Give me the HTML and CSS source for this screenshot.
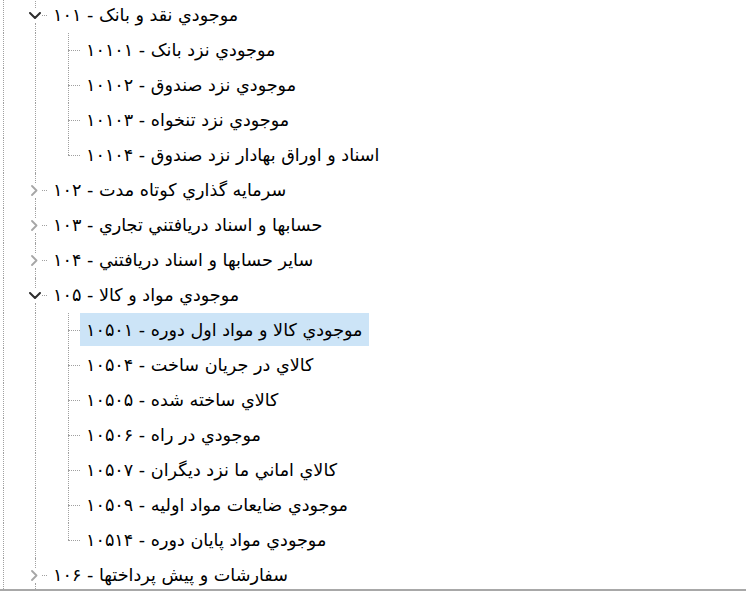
FILE: index.html
```html
<!DOCTYPE html>
<html lang="fa">
<head>
<meta charset="utf-8">
<title>Tree</title>
<link rel="stylesheet" href="styles.css">
</head>
<body>
<div class="viewport">
  <div class="tree">
    <div class="row">
      <span class="g0"></span>
      <span class="tg"><span class="vl"></span><span class="chev open"><svg width="12" height="7" viewBox="0 0 12 7"><polyline points="1,1 6,6 11,1"/></svg></span><span class="vl"></span></span>
      <span class="hc1"></span>
      <span class="label">موجودي نقد و بانک - ۱۰۱</span>
    </div>
    <div class="row">
      <span class="g0"></span><span class="g1"></span>
      <span class="tg2"><span class="vl"></span><span class="hc2"></span><span class="vl"></span></span>
      <span class="label">موجودي نزد بانک - ۱۰۱۰۱</span>
    </div>
    <div class="row">
      <span class="g0"></span><span class="g1"></span>
      <span class="tg2"><span class="vl"></span><span class="hc2"></span><span class="vl"></span></span>
      <span class="label">موجودي نزد صندوق - ۱۰۱۰۲</span>
    </div>
    <div class="row">
      <span class="g0"></span><span class="g1"></span>
      <span class="tg2"><span class="vl"></span><span class="hc2"></span><span class="vl"></span></span>
      <span class="label">موجودي نزد تنخواه - ۱۰۱۰۳</span>
    </div>
    <div class="row">
      <span class="g0"></span><span class="g1"></span>
      <span class="tg2"><span class="vl"></span><span class="hc2"></span><span class="vl none"></span></span>
      <span class="label">اسناد و اوراق بهادار نزد صندوق - ۱۰۱۰۴</span>
    </div>
    <div class="row">
      <span class="g0"></span>
      <span class="tg"><span class="vl"></span><span class="chev closed"><svg width="7" height="11" viewBox="0 0 7 11"><polyline points="1,1 5.5,5.5 1,10"/></svg></span><span class="vl"></span></span>
      <span class="hc1"></span>
      <span class="label">سرمايه گذاري کوتاه مدت - ۱۰۲</span>
    </div>
    <div class="row">
      <span class="g0"></span>
      <span class="tg"><span class="vl"></span><span class="chev closed"><svg width="7" height="11" viewBox="0 0 7 11"><polyline points="1,1 5.5,5.5 1,10"/></svg></span><span class="vl"></span></span>
      <span class="hc1"></span>
      <span class="label">حسابها و اسناد دريافتني تجاري - ۱۰۳</span>
    </div>
    <div class="row">
      <span class="g0"></span>
      <span class="tg"><span class="vl"></span><span class="chev closed"><svg width="7" height="11" viewBox="0 0 7 11"><polyline points="1,1 5.5,5.5 1,10"/></svg></span><span class="vl"></span></span>
      <span class="hc1"></span>
      <span class="label">ساير حسابها و اسناد دريافتني - ۱۰۴</span>
    </div>
    <div class="row">
      <span class="g0"></span>
      <span class="tg"><span class="vl"></span><span class="chev open"><svg width="12" height="7" viewBox="0 0 12 7"><polyline points="1,1 6,6 11,1"/></svg></span><span class="vl"></span></span>
      <span class="hc1"></span>
      <span class="label">موجودي مواد و کالا - ۱۰۵</span>
    </div>
    <div class="row">
      <span class="g0"></span><span class="g1"></span>
      <span class="tg2"><span class="vl"></span><span class="hc2"></span><span class="vl"></span></span>
      <span class="label selected">موجودي کالا و مواد اول دوره - ۱۰۵۰۱</span>
    </div>
    <div class="row">
      <span class="g0"></span><span class="g1"></span>
      <span class="tg2"><span class="vl"></span><span class="hc2"></span><span class="vl"></span></span>
      <span class="label">کالاي در جريان ساخت - ۱۰۵۰۴</span>
    </div>
    <div class="row">
      <span class="g0"></span><span class="g1"></span>
      <span class="tg2"><span class="vl"></span><span class="hc2"></span><span class="vl"></span></span>
      <span class="label">کالاي ساخته شده - ۱۰۵۰۵</span>
    </div>
    <div class="row">
      <span class="g0"></span><span class="g1"></span>
      <span class="tg2"><span class="vl"></span><span class="hc2"></span><span class="vl"></span></span>
      <span class="label">موجودي در راه - ۱۰۵۰۶</span>
    </div>
    <div class="row">
      <span class="g0"></span><span class="g1"></span>
      <span class="tg2"><span class="vl"></span><span class="hc2"></span><span class="vl"></span></span>
      <span class="label">کالاي اماني ما نزد ديگران - ۱۰۵۰۷</span>
    </div>
    <div class="row">
      <span class="g0"></span><span class="g1"></span>
      <span class="tg2"><span class="vl"></span><span class="hc2"></span><span class="vl"></span></span>
      <span class="label">موجودي ضايعات مواد اوليه - ۱۰۵۰۹</span>
    </div>
    <div class="row">
      <span class="g0"></span><span class="g1"></span>
      <span class="tg2"><span class="vl"></span><span class="hc2"></span><span class="vl none"></span></span>
      <span class="label">موجودي مواد پايان دوره - ۱۰۵۱۴</span>
    </div>
    <div class="row">
      <span class="g0"></span>
      <span class="tg"><span class="vl"></span><span class="chev closed"><svg width="7" height="11" viewBox="0 0 7 11"><polyline points="1,1 5.5,5.5 1,10"/></svg></span><span class="vl"></span></span>
      <span class="hc1"></span>
      <span class="label">سفارشات و پيش پرداختها - ۱۰۶</span>
    </div>
    <div class="row">
      <span class="g0"></span>
      <span class="tg"><span class="vl"></span><span class="chev closed"><svg width="7" height="11" viewBox="0 0 7 11"><polyline points="1,1 5.5,5.5 1,10"/></svg></span><span class="vl"></span></span>
      <span class="hc1"></span>
      <span class="label"></span>
    </div>
  </div>
</div>
</body>
</html>
```

FILE: styles.css
```css
html, body {
  margin: 0;
  padding: 0;
  background: #ffffff;
  overflow: hidden;
}

.viewport {
  height: 589px;
  overflow: hidden;
  border-bottom: 2px solid #a8a8a8;
  background: #ffffff;
}

.tree {
  margin-top: -2px;
  display: flex;
  flex-direction: column;
  font-family: "DejaVu Sans", sans-serif;
  font-size: 17.6px;
  color: #000000;
}

.row {
  display: flex;
  height: 35px;
  align-items: stretch;
}

.g0 {
  flex: none;
  width: 23px;
  margin-left: 3px;
  border-left: 1px dotted #a0a0a0;
}

.g1 {
  flex: none;
  width: 24px;
  margin-left: 8px;
  border-left: 1px dotted #a0a0a0;
}

.tg {
  flex: none;
  width: 15px;
  display: flex;
  flex-direction: column;
}

.tg .vl {
  flex: 1;
  margin-left: 8px;
  border-left: 1px dotted #a0a0a0;
}

.chev {
  flex: none;
  height: 15px;
  display: flex;
  align-items: center;
  justify-content: center;
  background: #ffffff;
}

.chev svg {
  display: block;
  fill: none;
  stroke-linecap: round;
  stroke-linejoin: round;
}

.chev.open svg {
  stroke: #2e2e2e;
  stroke-width: 2;
}

.chev.closed svg {
  stroke: #a6a6a6;
  stroke-width: 1.8;
}

.hc1 {
  flex: none;
  width: 5px;
  align-self: center;
  border-top: 1px dotted #a0a0a0;
}

.tg2 {
  flex: none;
  width: 20px;
  display: flex;
  flex-direction: column;
}

.tg2 .vl {
  flex: 1;
  margin-left: 8px;
  border-left: 1px dotted #a0a0a0;
}

.tg2 .vl.none {
  border-left-color: transparent;
}

.hc2 {
  flex: none;
  height: 0;
  margin-left: 8px;
  border-top: 1px dotted #a0a0a0;
}

.label {
  flex: none;
  height: 33px;
  padding: 0 6px;
  display: flex;
  align-items: center;
  direction: rtl;
  white-space: nowrap;
}

.label.selected {
  background: #cce4f7;
}
```
